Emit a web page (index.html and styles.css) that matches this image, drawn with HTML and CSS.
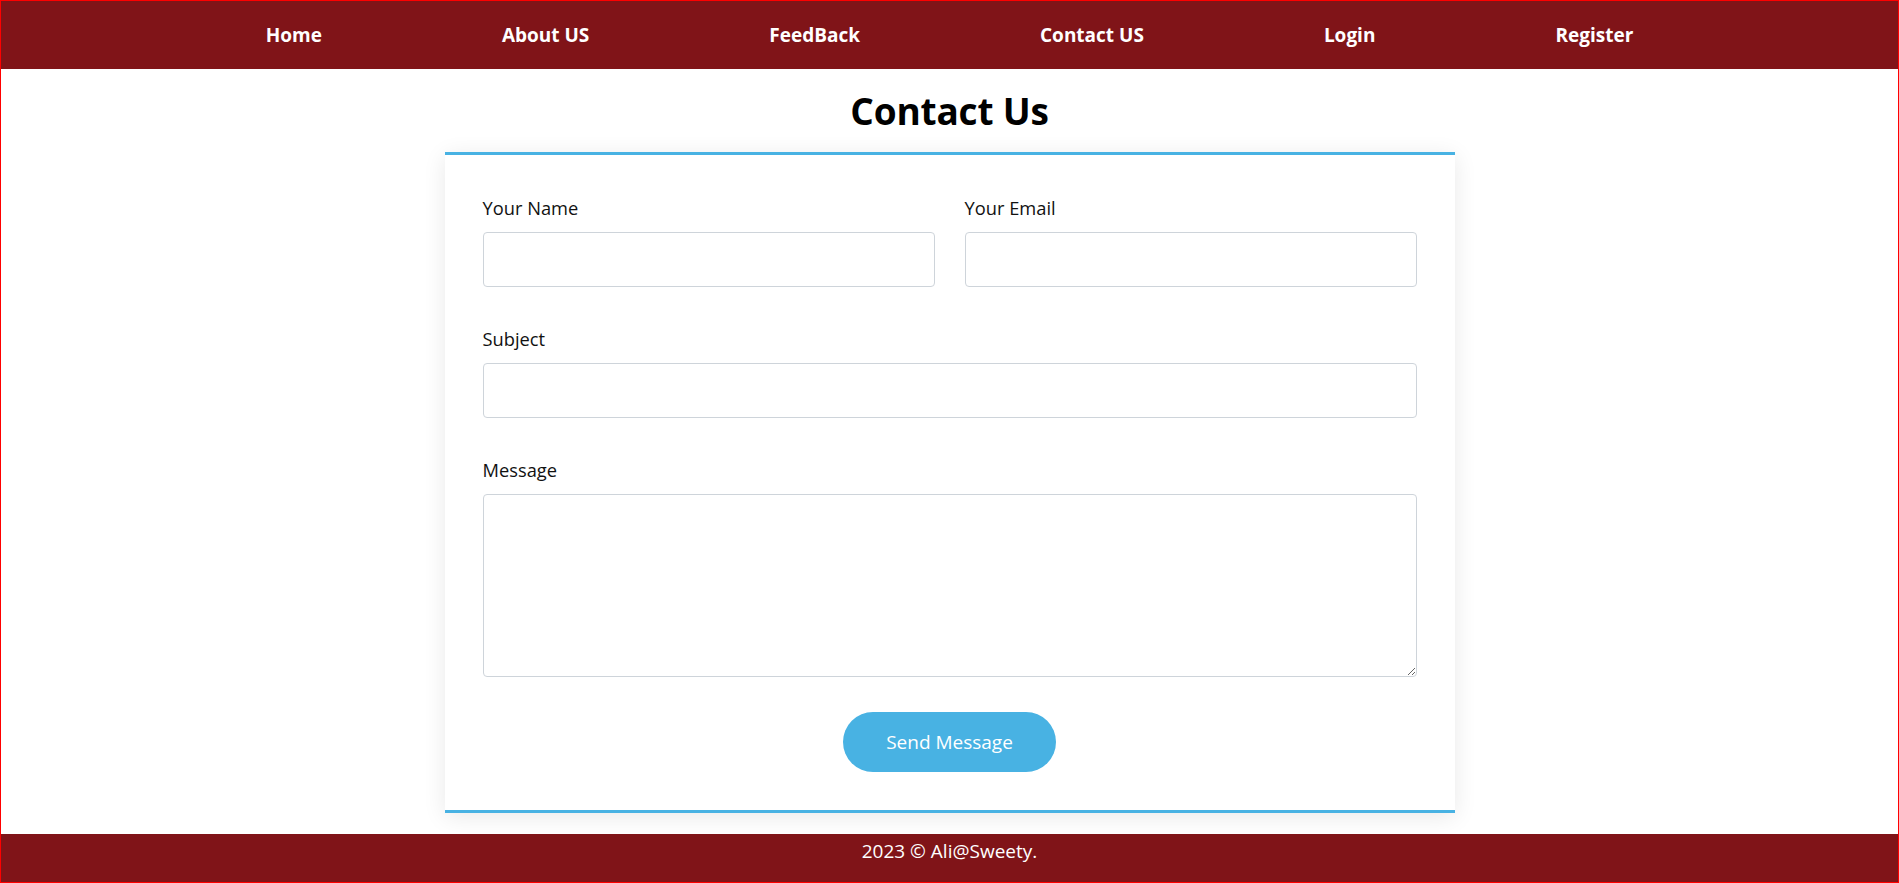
FILE: index.html
```html
<!DOCTYPE html>
<html lang="en">
<head>
<meta charset="utf-8">
<title>Contact Us</title>
<link rel="stylesheet" href="styles.css">
</head>
<body>
<div class="page">
  <nav class="nav">
    <a href="#">Home</a>
    <a href="#">About US</a>
    <a href="#">FeedBack</a>
    <a href="#">Contact US</a>
    <a href="#">Login</a>
    <a href="#">Register</a>
  </nav>
  <main class="main">
    <h1 class="title">Contact Us</h1>
    <form class="card">
      <div class="row">
        <div class="group">
          <label class="label">Your Name</label>
          <input class="field" type="text">
        </div>
        <div class="group">
          <label class="label">Your Email</label>
          <input class="field" type="email">
        </div>
      </div>
      <div class="group">
        <label class="label">Subject</label>
        <input class="field" type="text">
      </div>
      <div class="group group-last">
        <label class="label">Message</label>
        <textarea class="field area"></textarea>
      </div>
      <div class="actions">
        <button class="btn" type="button">Send Message</button>
      </div>
    </form>
  </main>
  <footer class="footer">2023 © Ali@Sweety.</footer>
</div>
</body>
</html>
```

FILE: styles.css
```css
* { box-sizing: border-box; }
html, body { margin: 0; padding: 0; }
body {
  font-family: "Open Sans", "Noto Sans", sans-serif;
  color: #111;
  background: #fff;
}
.page {
  min-height: 100vh;
  border: 1px solid #ff0000;
  display: flex;
  flex-direction: column;
}
.nav {
  height: 68px;
  background: #801418;
  display: flex;
  justify-content: center;
  align-items: center;
}
.nav a {
  color: #fff;
  text-decoration: none;
  font-weight: 700;
  font-size: 19px;
  padding: 0 90px;
  letter-spacing: 0;
}
.main {
  flex: 1;
}
.title {
  margin: 19px 0 18px;
  text-align: center;
  font-size: 37px;
  line-height: 46px;
  font-weight: 700;
  color: #000;
  letter-spacing: -0.2px;
}
.card {
  width: 1010px;
  margin: 0 auto;
  background: #fff;
  border-top: 3px solid #48b2e3;
  border-bottom: 3px solid #48b2e3;
  box-shadow: 0 4px 22px rgba(0, 0, 0, 0.09);
  padding: 41px 38px 38px 38px;
}
.row {
  display: flex;
  gap: 30px;
}
.row .group { flex: 1; }
.group {
  display: flex;
  flex-direction: column;
  margin-bottom: 40px;
}
.group-last { margin-bottom: 35px; }
.label {
  font-size: 18.3px;
  line-height: 24px;
  margin-bottom: 12px;
  color: #111;
}
.field {
  height: 55px;
  border: 1px solid #ced4da;
  border-radius: 4px;
  font: inherit;
  padding: 6px 12px;
  background: #fff;
}
.area {
  height: 183px;
  resize: vertical;
}
.actions {
  display: flex;
  justify-content: center;
}
.btn {
  width: 213px;
  height: 60px;
  border: none;
  border-radius: 30px;
  background: #48b2e3;
  color: #fff;
  font-family: inherit;
  font-size: 19px;
}
.footer {
  height: 48px;
  background: #801418;
  color: #fff;
  font-size: 19px;
  display: flex;
  justify-content: center;
  align-items: center;
  padding-bottom: 14px;
}
```
